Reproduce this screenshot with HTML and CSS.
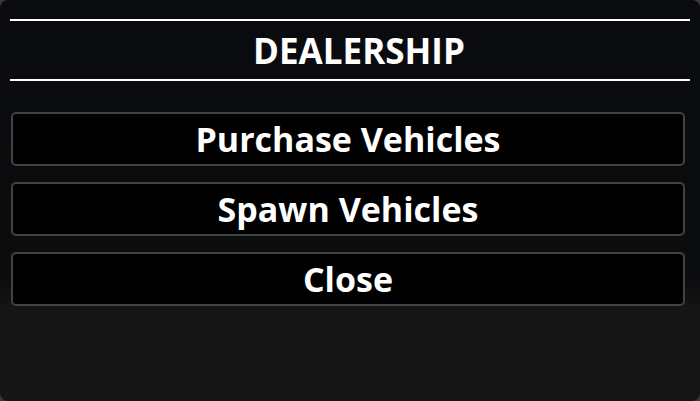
FILE: index.html
```html
<!DOCTYPE html>
<html lang="en">
<head>
    <meta charset="UTF-8">
    <meta name="viewport" content="width=device-width, initial-scale=1.0">
    <title>Dealership</title>
    <link rel="stylesheet" href="styles.css">
</head>
<body>
    <div class="panel">
        <div class="header">
            <h1>DEALERSHIP</h1>
        </div>

        <div class="menu">
            <button class="menu-btn">Purchase Vehicles</button>
            <button class="menu-btn">Spawn Vehicles</button>
            <button class="menu-btn">Close</button>
        </div>
    </div>
</body>
</html>
```

FILE: styles.css
```css
html, body {
    margin: 0;
    height: 100%;
    background-color: #3a3a3a;
}
body {
    font-family: "Open Sans", "Liberation Sans", sans-serif;
}
.panel {
    box-sizing: border-box;
    width: 700px;
    height: 401px;
    padding: 19px 10px 0 10px;
    border-radius: 8px;
    background: linear-gradient(to bottom, #0a0b0e 0, #0b0c0e 280px, #151515 310px, #151515 100%);
    overflow: hidden;
}
.header {
    border-top: 2px solid #fff;
    border-bottom: 2px solid #fff;
    height: 58px;
    padding-left: 18px;
    display: flex;
    align-items: center;
    justify-content: center;
}
.header h1 {
    margin: 0;
    color: #fff;
    font-size: 35px;
    font-weight: 700;
    line-height: 1;
}
.menu {
    display: flex;
    flex-direction: column;
    gap: 16px;
    margin: 31px 5px 0 1px;
}
.menu-btn {
    height: 54px;
    background-color: #000;
    border: 2px solid #424242;
    border-radius: 5px;
    color: #fff;
    font-family: inherit;
    font-size: 34px;
    font-weight: 700;
    line-height: 1;
    cursor: pointer;
    padding: 0;
}
```
